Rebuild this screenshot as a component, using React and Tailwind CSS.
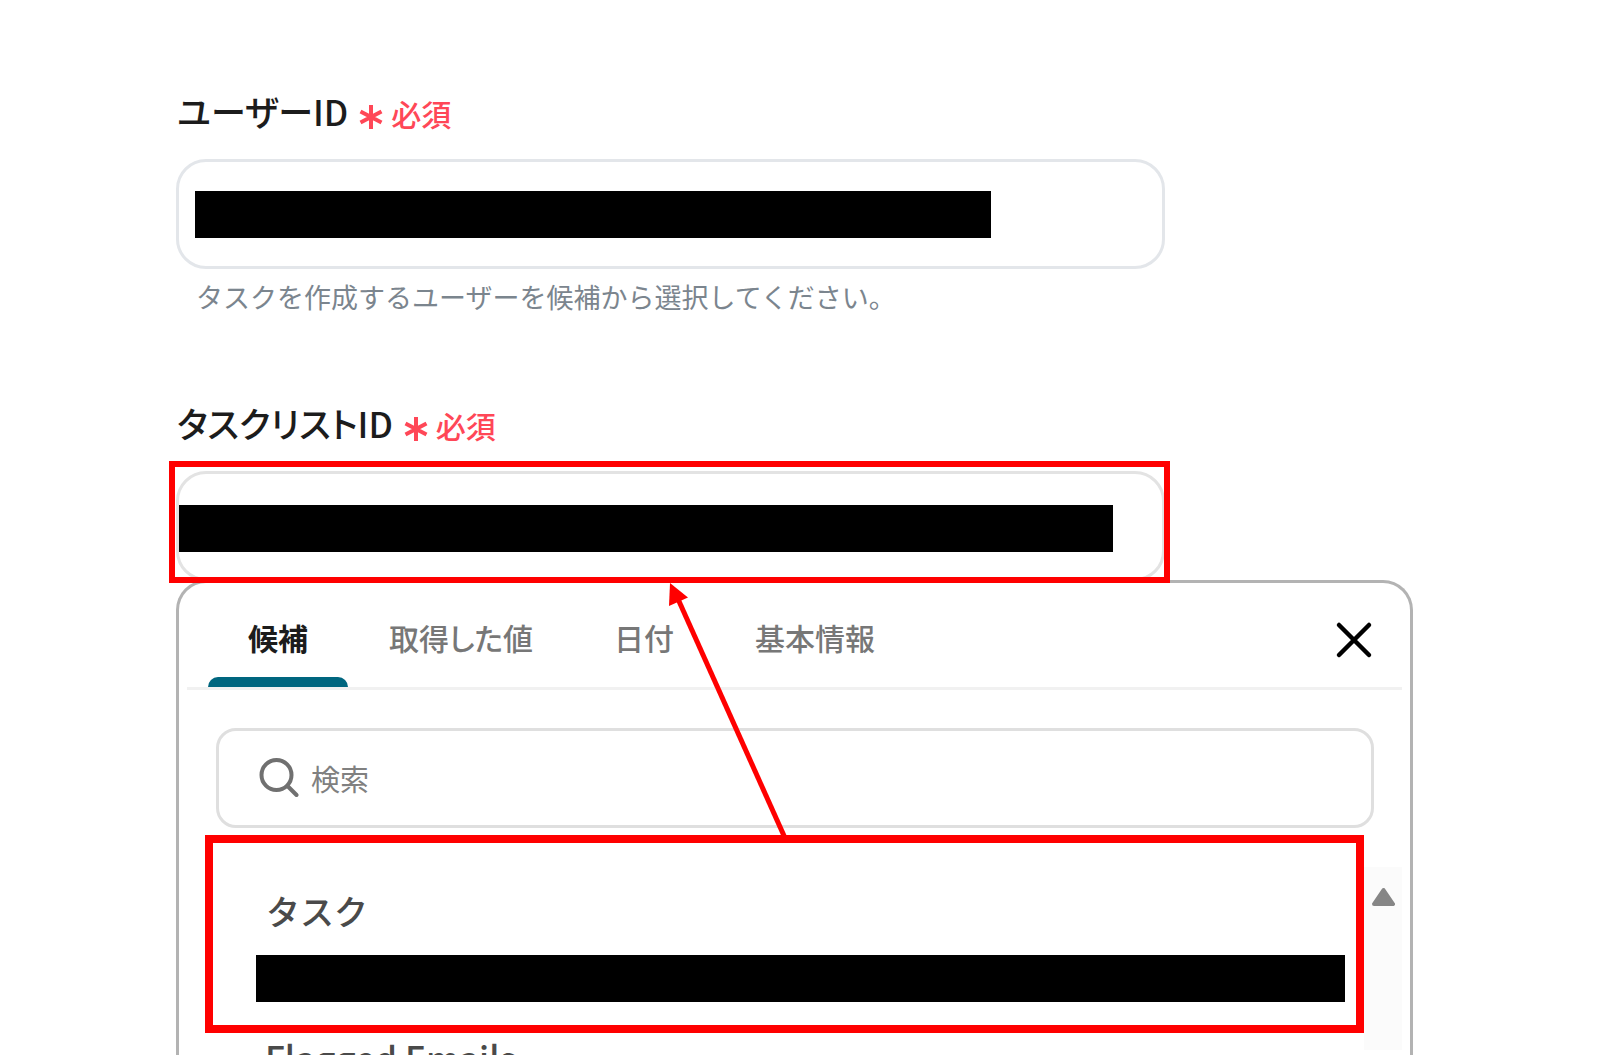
import React, { useState } from 'react';

const TABS = [
  { id: 'candidates', label: '候補' },
  { id: 'values', label: '取得した値' },
  { id: 'date', label: '日付' },
  { id: 'basic', label: '基本情報' },
];

function FieldLabel({ htmlFor, children }) {
  return (
    <label htmlFor={htmlFor} className="flex items-center h-12 mb-6 pl-px whitespace-nowrap">
      <span className="text-[35px] leading-12 font-medium text-[#1c1c1c] [font-feature-settings:'palt']">{children}</span>
      <svg className="w-6 h-6 ml-[11px] mt-3 text-[#ff4757]" viewBox="0 0 24 24" fill="none" stroke="currentColor" strokeWidth="4">
        <path d="M12 0v24M22.500 6.500l-21 11M22.500 17.500l-21-11" />
      </svg>
      <span className="ml-2 mt-1 text-[30px] leading-12 font-medium text-[#ff4757]">必須</span>
    </label>
  );
}

function Redacted({ className }) {
  return <span aria-hidden="true" className={`block h-[47px] bg-black ${className}`}></span>;
}

export default function App() {
  const [activeTab, setActiveTab] = useState('candidates');

  return (
    <main className="h-screen overflow-hidden bg-white pt-[87px] pl-44 pr-[187px] font-['Noto_Sans_CJK_JP',sans-serif]">

      {/* User ID */}
      <section className="mr-[248px] mb-20">
        <FieldLabel htmlFor="user-id">ユーザーID</FieldLabel>
        <div className="relative">
          <input
            id="user-id"
            readOnly
            className="block w-full h-[110px] rounded-[30px] border-3 border-[#e3e6ea] bg-white px-4 text-[28px] outline-none"
          />
          <Redacted className="absolute left-[19px] top-8 w-[796px]" />
        </div>
        <p className="mt-2 mb-[82px] pl-5 text-[27px] leading-10 text-[#7b858e] whitespace-nowrap">
          タスクを作成するユーザーを候補から選択してください。
        </p>
      </section>

      {/* Task list ID */}
      <section className="mr-[248px]">
        <FieldLabel htmlFor="tasklist-id">タスクリストID</FieldLabel>
        <div className="relative z-10">
          <input
            id="tasklist-id"
            readOnly
            className="block w-full h-[110px] rounded-[30px] border-3 border-[#e3e3e3] bg-white px-4 text-[28px] outline-none"
          />
          <Redacted className="absolute left-[3px] top-[34px] w-[934px]" />
          <div className="absolute -left-[7px] -right-[5px] -top-[10px] -bottom-[2px] border-6 border-[#ff0000] pointer-events-none"></div>
          {/* Arrow from the option up to the field */}
          <svg className="absolute left-[480px] top-[110px] w-[140px] h-[260px] pointer-events-none" viewBox="0 0 140 260" fill="none">
            <path d="M22 18 129 257" stroke="#ff0000" strokeWidth="5" />
            <path d="M14 2 32 16.500 13 25Z" fill="#ff0000" />
          </svg>
        </div>
      </section>

      {/* Suggestions panel */}
      <section className="-mt-px h-[520px] rounded-t-[30px] border-3 border-b-0 border-[#b3b3b3] bg-white">
        <div className="mx-2 flex h-[107px] justify-between border-b-3 border-[#f1f1f1]">
          <div role="tablist" className="flex gap-px pl-[21px]">
            {TABS.map((tab) => (
              <button
                key={tab.id}
                type="button"
                role="tab"
                aria-selected={activeTab === tab.id}
                onClick={() => setActiveTab(tab.id)}
                className={`flex flex-col justify-between px-10 pt-[30px] text-[30px] leading-12 whitespace-nowrap ${
                  activeTab === tab.id ? 'font-bold text-[#1c1c1c]' : "font-medium text-[#777777] [font-feature-settings:'palt']"
                }`}
              >
                {tab.label}
                {activeTab === tab.id && <span className="-mx-10 h-[10px] self-stretch rounded-t-[10px] bg-[#00667f]"></span>}
              </button>
            ))}
          </div>
          <button type="button" aria-label="閉じる" className="mr-7 mt-[10px]">
            <svg className="w-10 h-10" viewBox="0 0 40 40" fill="none" stroke="#000" strokeWidth="4.500" strokeLinecap="round">
              <path d="M5 5 35 35M35 5 5 35" />
            </svg>
          </button>
        </div>

        <div className="mt-[38px] ml-[37px] mr-9 flex h-[100px] items-center rounded-[20px] border-3 border-[#dfdfdf] pl-10">
          <svg className="w-10 h-10 shrink-0" viewBox="0 0 40 40" fill="none" stroke="#707070" strokeWidth="4" strokeLinecap="round">
            <circle cx="17.500" cy="17" r="15" />
            <path d="m28.500 28 9 9" />
          </svg>
          <input
            type="text"
            aria-label="検索"
            placeholder="検索"
            className="ml-3 h-12 flex-1 bg-transparent text-[29px] text-[#333333] outline-none placeholder:text-[#808080] placeholder:opacity-100"
          />
        </div>

        <div className="mt-[7px] flex">
          <ul className="ml-[26px] flex-1">
            <li className="border-8 border-[#ff0000] h-[198px]">
              <button type="button" className="block w-full pt-11 pl-[43px] pr-[11px] text-left text-[34px] leading-12 font-medium text-[#4a4a4a]">
                <span className="block pl-[10px]">タスク</span>
                <Redacted className="mt-5" />
              </button>
            </li>
            <li>
              <button type="button" className="block pl-[60px] text-left text-[35px] leading-12 font-medium text-[#4a4a4a] whitespace-nowrap">
                Flagged Emails
              </button>
            </li>
          </ul>
          {/* Scroll track */}
          <div className="mt-8 mr-2 flex h-[183px] w-[38px] justify-center bg-[#fbfbfb] pt-5">
            <svg className="w-6 h-5" viewBox="0 0 24 20" fill="#868686" stroke="#868686" strokeWidth="4" strokeLinejoin="round">
              <path d="M12.500 3 22 17H3Z" />
            </svg>
          </div>
        </div>
      </section>
    </main>
  );
}
